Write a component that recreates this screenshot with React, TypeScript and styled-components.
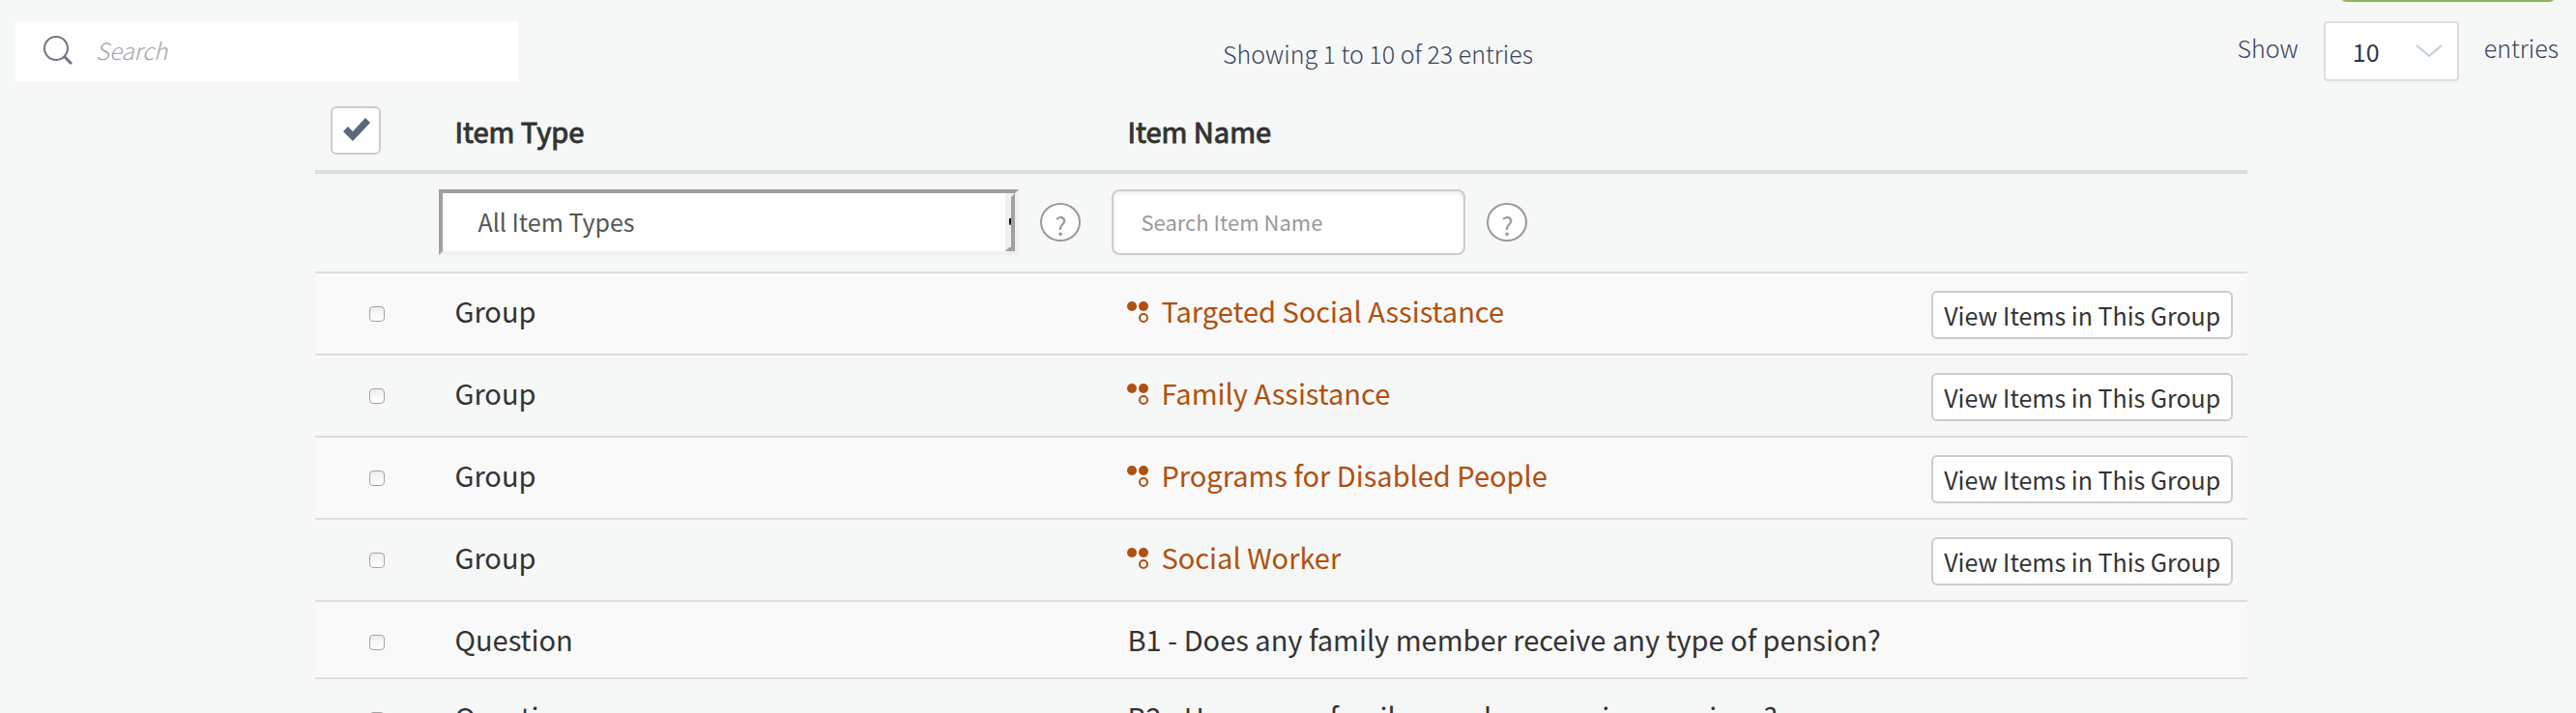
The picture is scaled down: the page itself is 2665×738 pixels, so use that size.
import React from 'react';
import styled, { createGlobalStyle } from 'styled-components';

const sans = `"Noto Sans CJK SC", "Noto Sans", sans-serif`;
const line = '#dcdddd';

const GlobalStyle = createGlobalStyle`
  * { box-sizing: border-box; }
  html { overflow: hidden; }
  body { margin: 0; height: 100vh; overflow: hidden; background: #f6f8f7; font-family: ${sans}; color: #333; }
  button, input, select { font-family: inherit; margin: 0; }
`;

const Page = styled.main`
  display: flex;
  flex-direction: column;
`;

const TopActions = styled.div`
  display: flex;
  justify-content: flex-end;
  align-items: flex-end;
  height: 2px;
  padding-right: 20px;
  overflow: hidden;
`;

const CreateButton = styled.button`
  flex: none;
  width: 225px;
  height: 60px;
  border: 0;
  border-radius: 8px;
  background: #8fb558;
`;

const Toolbar = styled.div`
  display: grid;
  grid-template-columns: 1fr auto 1fr;
  align-items: start;
  margin-top: 20px;
  padding: 0 16px;
  color: #3a445a;
  font-size: 25px;
  font-weight: 300;
  line-height: 28px;
`;

const SearchBox = styled.label`
  display: flex;
  align-items: center;
  width: 520px;
  height: 62px;
  padding: 0 0 2px 29px;
  gap: 24px;
  background: #fff;
`;

const SearchInput = styled.input`
  flex: 1;
  min-width: 0;
  border: 0;
  padding: 0 0 2px;
  background: transparent;
  font-size: 24px;
  font-weight: 300;
  outline: none;
  &::placeholder { color: #a0a4aa; font-style: italic; opacity: 1; }
`;

const Summary = styled.p`
  margin: 0;
  padding: 19px 0 0 186px;
`;

const LengthControl = styled.label`
  display: flex;
  justify-content: flex-end;
  align-items: flex-start;
  gap: 26px;
  padding-right: 2px;
`;

const LengthText = styled.span`
  padding-top: 13px;
`;

const SelectWrap = styled.span`
  position: relative;
  display: block;
`;

const LengthSelect = styled.select`
  display: block;
  appearance: none;
  width: 140px;
  height: 62px;
  padding: 0 0 0 28px;
  border: 2px solid ${line};
  border-radius: 4px;
  background: #fff;
  color: #2f374a;
  font-size: 25px;
`;

const Chevron = styled.svg`
  position: absolute;
  right: 17px;
  top: 24px;
  pointer-events: none;
`;

const Table = styled.table`
  width: 75%;
  margin: 12px 0 0 12.25%;
  table-layout: fixed;
  border-collapse: separate;
  border-spacing: 0;
  font-size: 29px;
  line-height: 40px;
`;

const SelectCol = styled.col`
  width: 128px;
`;

const TypeCol = styled.col`
  width: 696px;
`;

const ActionCol = styled.col`
  width: 343px;
`;

const HeadCell = styled.th`
  height: 84px;
  padding: 19px 16px 0;
  border-bottom: 4px solid ${line};
  text-align: left;
  vertical-align: top;
  font-weight: 400;
  -webkit-text-stroke: 1px currentColor;
  &:first-child { padding-top: 14px; }
`;

const CheckAll = styled.button`
  display: flex;
  align-items: center;
  justify-content: center;
  width: 52px;
  height: 50px;
  padding: 0 0 2px 2px;
  border: 2px solid #ccc;
  border-radius: 6px;
  background: #fff;
`;

const FilterCell = styled.td`
  height: 101px;
  padding: 16px 0 0;
  vertical-align: top;
`;

const FilterGroup = styled.div`
  display: flex;
  align-items: center;
  gap: 22px;
`;

const TypeWrap = styled(SelectWrap)`
  width: 600px;
`;

const TypeSelect = styled.select`
  display: block;
  appearance: none;
  width: 100%;
  height: 68px;
  padding: 0 36px 2px;
  border: 4px solid;
  border-color: #a0a0a0 #f1efef #f1efef #a0a0a0;
  border-radius: 0;
  background: #fff;
  color: #555;
  font-size: 25px;
`;

const TypeArrow = styled.span`
  position: absolute;
  right: 4px;
  top: 4px;
  display: flex;
  align-items: center;
  width: 10px;
  height: 60px;
  padding-bottom: 2px;
  border: 4px solid;
  border-color: #f1efef #a0a0a0 #a0a0a0 #f1efef;
  background: #f1efef;
  pointer-events: none;
  &::after {
    content: '';
    width: 2px;
    height: 7px;
    background: linear-gradient(#000 70%, #777);
  }
`;

const NameInput = styled.input`
  width: 366px;
  height: 68px;
  padding: 0 28px 2px;
  border: 2px solid #ccc;
  border-radius: 8px;
  background: #fff;
  box-shadow: inset 0 2px 4px rgba(0, 0, 0, 0.08);
  font-size: 22px;
  &::placeholder { color: #999; opacity: 1; }
`;

const Help = styled.button`
  width: 42px;
  height: 40px;
  padding: 6px 0 0;
  border: 2px solid #999;
  border-radius: 50%;
  background: #fff;
  color: #999;
  font-size: 26px;
  line-height: 30px;
`;

const Row = styled.tr<{ $striped: boolean }>`
  background: ${(p) => (p.$striped ? '#f9f9f9' : 'transparent')};
`;

const Cell = styled.td<{ $tall: boolean }>`
  height: ${(p) => (p.$tall ? 85 : 80)}px;
  padding: 18px 16px 0;
  border-top: 2px solid ${line};
  vertical-align: top;
  white-space: nowrap;
`;

const SelectCell = styled(Cell)`
  padding: 34px 0 0 56px;
`;

const Tick = styled.input`
  appearance: none;
  display: block;
  width: 16px;
  height: 16px;
  border: 1px solid #a4a4a4;
  border-radius: 4px;
  background: linear-gradient(#eee, #fff);
`;

const GroupLink = styled.a`
  color: #b0500f;
  text-decoration: none;
  svg { margin-right: 12px; }
`;

const ViewButton = styled.button`
  display: block;
  margin-left: auto;
  height: 50px;
  padding: 0 11px;
  border: 2px solid #ccc;
  border-radius: 6px;
  background: #fff;
  color: #333;
  font-size: 25px;
  line-height: 36px;
  white-space: nowrap;
`;

const GroupIcon = () => (
  <svg width="23" height="22" viewBox="0 0 23 22" aria-hidden="true">
    <circle cx="5" cy="5" r="5" fill="#b0500f" />
    <circle cx="17" cy="5" r="5" fill="#b0500f" />
    <circle cx="17" cy="17" r="4" fill="none" stroke="#b0500f" strokeWidth="2" />
  </svg>
);

const items = [
  { type: 'Group', name: 'Targeted Social Assistance' },
  { type: 'Group', name: 'Family Assistance' },
  { type: 'Group', name: 'Programs for Disabled People' },
  { type: 'Group', name: 'Social Worker' },
  { type: 'Question', name: 'B1 - Does any family member receive any type of pension?' },
  { type: 'Question', name: 'B2 - How many family members receive pensions?' },
];

export default function App() {
  return (
    <>
      <GlobalStyle />
      <Page>
        <TopActions>
          <CreateButton aria-label="Create" />
        </TopActions>
        <Toolbar>
          <SearchBox>
            <svg width="30" height="30" viewBox="0 0 30 30" fill="none" stroke="#6f7785" aria-hidden="true">
              <circle cx="13" cy="13" r="12" strokeWidth="2" />
              <path d="M21 21l8 8" strokeWidth="3" />
            </svg>
            <SearchInput placeholder="Search" aria-label="Search" />
          </SearchBox>
          <Summary>Showing 1 to 10 of 23 entries</Summary>
          <LengthControl>
            <LengthText>Show</LengthText>
            <SelectWrap>
              <LengthSelect defaultValue="10">
                <option>10</option>
                <option>25</option>
              </LengthSelect>
              <Chevron width="28" height="14" viewBox="0 0 28 14" fill="none" stroke="#b9d0da" strokeWidth="2">
                <path d="M1 1l13 11L27 1" />
              </Chevron>
            </SelectWrap>
            <LengthText>entries</LengthText>
          </LengthControl>
        </Toolbar>
        <Table>
          <colgroup>
            <SelectCol />
            <TypeCol />
            <col />
            <ActionCol />
          </colgroup>
          <thead>
            <tr>
              <HeadCell>
                <CheckAll aria-label="Select all">
                  <svg width="28" height="24" viewBox="0 0 28 24" fill="#5b677b" aria-hidden="true">
                    <path d="M0 14l5-5 5 5L23 0l5 5L10 24z" />
                  </svg>
                </CheckAll>
              </HeadCell>
              <HeadCell>Item Type</HeadCell>
              <HeadCell>Item Name</HeadCell>
              <HeadCell />
            </tr>
          </thead>
          <tbody>
            <tr>
              <FilterCell />
              <FilterCell>
                <FilterGroup>
                  <TypeWrap>
                    <TypeSelect aria-label="Item type">
                      <option>All Item Types</option>
                      <option>Group</option>
                      <option>Question</option>
                    </TypeSelect>
                    <TypeArrow />
                  </TypeWrap>
                  <Help aria-label="Help on item types">?</Help>
                </FilterGroup>
              </FilterCell>
              <FilterCell colSpan={2}>
                <FilterGroup>
                  <NameInput placeholder="Search Item Name" aria-label="Search item name" />
                  <Help aria-label="Help on item names">?</Help>
                </FilterGroup>
              </FilterCell>
            </tr>
            {items.map((item, i) => {
              const group = item.type === 'Group';
              return (
                <Row key={item.name} $striped={i % 2 === 0}>
                  <SelectCell $tall={group}>
                    <Tick type="checkbox" aria-label={`Select ${item.name}`} />
                  </SelectCell>
                  <Cell $tall={group}>{item.type}</Cell>
                  <Cell $tall={group} colSpan={group ? 1 : 2}>
                    {group ? (
                      <GroupLink href="#group">
                        <GroupIcon />
                        {item.name}
                      </GroupLink>
                    ) : (
                      item.name
                    )}
                  </Cell>
                  {group && (
                    <Cell $tall>
                      <ViewButton>View Items in This Group</ViewButton>
                    </Cell>
                  )}
                </Row>
              );
            })}
          </tbody>
        </Table>
      </Page>
    </>
  );
}
